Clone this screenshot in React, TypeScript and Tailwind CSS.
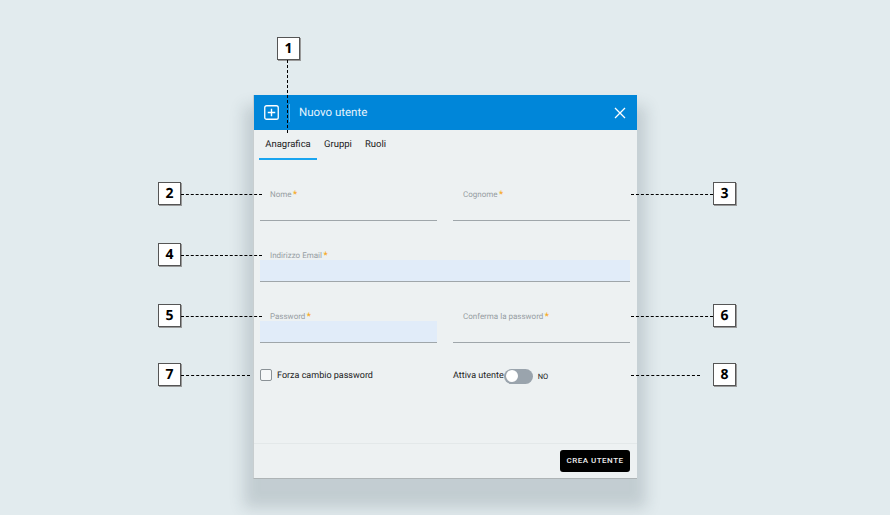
import React from "react";

const Req = () => <span className="text-[#f7a81b] ml-[1.5px] text-[9px] font-bold leading-[10px]">*</span>;

function Field({ label, filled, wide }: { label: string; filled?: boolean; wide?: boolean }) {
  return (
    <div className={wide ? "col-span-2 relative h-[32px]" : "relative h-[32px]"}>
      <label className="absolute left-[10px] top-[1px] text-[8px] leading-[10px] text-[#969da2] z-10">
        {label}
        <Req />
      </label>
      <div className={filled ? "absolute left-0 right-0 bottom-0 h-[22px] bg-[#e1ecf9] border-b border-[#9fa6aa]" : "absolute left-0 right-0 bottom-0 h-[22px] border-b border-[#9fa6aa]"} />
    </div>
  );
}

function Callout({ n, className }: { n: number; className: string }) {
  return (
    <div className={"absolute w-[23px] h-[23px] bg-white border border-[#555] shadow-[1px_1px_0_#999] flex items-center justify-center text-[14px] font-bold text-black font-['Open_Sans',sans-serif] " + className}>
      {n}
    </div>
  );
}

const HLine = ({ className }: { className: string }) => (
  <div className={"absolute h-0 border-t border-dashed border-black " + className} />
);

export default function App() {
  return (
    <div className="relative w-[890px] h-[515px] overflow-hidden bg-[#e2ebee] pl-[253px] pt-[95px] font-['Roboto',sans-serif] [text-rendering:geometricPrecision]">
      <div className="w-[384px] h-[384px] flex flex-col bg-[#edf1f2] shadow-[0_20px_14px_9px_rgba(40,60,70,0.17)] border-b border-l border-b-[#aeb4b6] border-l-[#c8ced0]">
        <header className="h-[35px] shrink-0 bg-[#0086d9] flex items-center pl-[10px] pr-[11px] text-white">
          <svg width="15" height="15" viewBox="0 0 16 16" fill="none" stroke="white" strokeWidth="1.4">
            <rect x="0.8" y="0.8" width="14.4" height="14.4" rx="2" />
            <path d="M8 4v8M4 8h8" strokeWidth="1.5" />
          </svg>
          <div className="w-px h-[18px] bg-[#4fb0ec] ml-[10px]" />
          <span className="ml-[9px] text-[11.5px] text-[#e6f4fd] flex-1">Nuovo utente</span>
          <svg width="12" height="12" viewBox="0 0 12 12" stroke="white" strokeWidth="1.3" fill="none">
            <path d="M1 1l10 10M11 1L1 11" />
          </svg>
        </header>
        <nav className="h-[30px] shrink-0 flex text-[9.5px] text-[#222] pl-[5px]">
          <div className="w-[58px] text-center pt-[8px] border-b-2 border-[#1aa5f0] leading-[13px]">Anagrafica</div>
          <div className="ml-[7px] pt-[8px] leading-[13px]">Gruppi</div>
          <div className="ml-[13px] pt-[8px] leading-[13px]">Ruoli</div>
        </nav>
        <div className="flex-1 pl-[6px] pr-[7px] pt-[29px] min-h-0">
          <div className="grid grid-cols-2 gap-x-[16px] gap-y-[29px]">
            <Field label="Nome" />
            <Field label="Cognome" />
            <Field label="Indirizzo Email" filled wide />
            <Field label="Password" filled />
            <Field label="Conferma la password" />
          </div>
          <div className="grid grid-cols-2 gap-x-[16px] mt-[25px]">
            <div className="flex items-center h-[14px] text-[9px] text-[#222]">
              <div className="w-[12px] h-[12px] bg-[#f5f7f8] border border-[#8a9196] rounded-[2px] mr-[5px]" />
              <span className="mt-[3px]">Forza cambio password</span>
            </div>
            <div className="flex items-center h-[14px] text-[9px] text-[#222] pt-[2px]">
              <span className="mt-[2px]">Attiva utente</span>
              <div className="w-[29px] h-[15px] rounded-full bg-[#9aa4ad] flex items-center pl-[2px]">
                <div className="w-[12px] h-[12px] rounded-full bg-white" />
              </div>
              <span className="ml-[5px] mt-[2px] text-[7.5px]">NO</span>
            </div>
          </div>
        </div>
        <footer className="h-[35px] shrink-0 border-t border-[#e3e8e9] flex items-center justify-end pr-[7px]">
          <button className="h-[22px] w-[70px] bg-black rounded-[3px] text-[#eee] text-[8px] font-medium tracking-[0.5px]">CREA UTENTE</button>
        </footer>
      </div>

      <Callout n={1} className="left-[277px] top-[37px]" />
      <div className="absolute left-[287px] top-[60px] h-[73px] w-0 border-l border-dashed border-black" />
      <Callout n={2} className="left-[158px] top-[182px]" />
      <HLine className="left-[181px] top-[194px] w-[81px]" />
      <Callout n={3} className="left-[713px] top-[182px]" />
      <HLine className="left-[631px] top-[194px] w-[82px]" />
      <Callout n={4} className="left-[158px] top-[243px]" />
      <HLine className="left-[181px] top-[255px] w-[81px]" />
      <Callout n={5} className="left-[158px] top-[304px]" />
      <HLine className="left-[181px] top-[316px] w-[81px]" />
      <Callout n={6} className="left-[713px] top-[304px]" />
      <HLine className="left-[631px] top-[316px] w-[82px]" />
      <Callout n={7} className="left-[158px] top-[363px]" />
      <HLine className="left-[181px] top-[375px] w-[69px]" />
      <Callout n={8} className="left-[713px] top-[363px]" />
      <HLine className="left-[631px] top-[375px] w-[69px]" />
    </div>
  );
}
